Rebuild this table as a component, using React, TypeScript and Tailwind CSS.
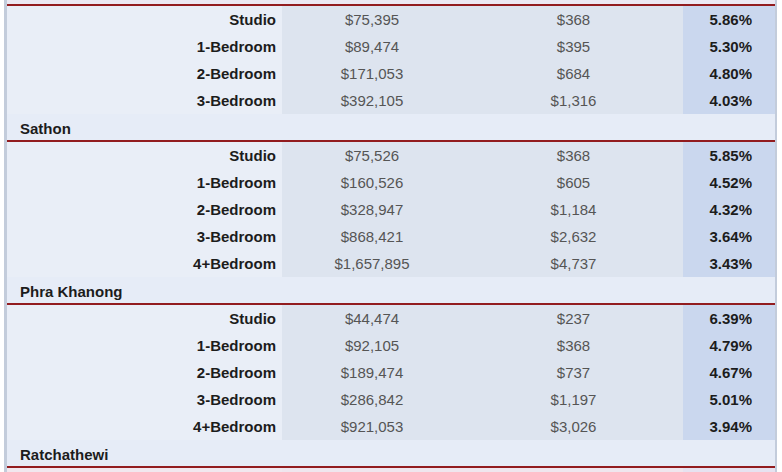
import React from 'react';

type Row = { type: string; price: string; rent: string; yieldPct: string };
type Group = { name: string; rows: Row[] };

const firstRows: Row[] = [
  { type: 'Studio', price: '$75,395', rent: '$368', yieldPct: '5.86%' },
  { type: '1-Bedroom', price: '$89,474', rent: '$395', yieldPct: '5.30%' },
  { type: '2-Bedroom', price: '$171,053', rent: '$684', yieldPct: '4.80%' },
  { type: '3-Bedroom', price: '$392,105', rent: '$1,316', yieldPct: '4.03%' },
];

const groups: Group[] = [
  {
    name: 'Sathon',
    rows: [
      { type: 'Studio', price: '$75,526', rent: '$368', yieldPct: '5.85%' },
      { type: '1-Bedroom', price: '$160,526', rent: '$605', yieldPct: '4.52%' },
      { type: '2-Bedroom', price: '$328,947', rent: '$1,184', yieldPct: '4.32%' },
      { type: '3-Bedroom', price: '$868,421', rent: '$2,632', yieldPct: '3.64%' },
      { type: '4+Bedroom', price: '$1,657,895', rent: '$4,737', yieldPct: '3.43%' },
    ],
  },
  {
    name: 'Phra Khanong',
    rows: [
      { type: 'Studio', price: '$44,474', rent: '$237', yieldPct: '6.39%' },
      { type: '1-Bedroom', price: '$92,105', rent: '$368', yieldPct: '4.79%' },
      { type: '2-Bedroom', price: '$189,474', rent: '$737', yieldPct: '4.67%' },
      { type: '3-Bedroom', price: '$286,842', rent: '$1,197', yieldPct: '5.01%' },
      { type: '4+Bedroom', price: '$921,053', rent: '$3,026', yieldPct: '3.94%' },
    ],
  },
  { name: 'Ratchathewi', rows: [] },
];

function DataRow({ row }: { row: Row }) {
  return (
    <div className="grid h-[27px] grid-cols-[275px_182px_219px_92px] items-center text-[15px] leading-none">
      <div className="flex h-full items-center justify-end bg-[#e9eef7] pr-[6px] font-bold text-[#1c1c1c]">{row.type}</div>
      <div className="flex h-full items-center justify-center bg-[#dde4ef] pr-[2px] text-[#555555]">{row.price}</div>
      <div className="flex h-full items-center justify-center bg-[#dde4ef] text-[#555555]">{row.rent}</div>
      <div className="flex h-full items-center justify-end bg-[#cad7ee] pr-[23px] font-bold text-[#1c1c1c]">{row.yieldPct}</div>
    </div>
  );
}

function GroupHeader({ name }: { name: string }) {
  return (
    <div className="flex h-[28px] items-center border-b-2 border-[#921c1f] bg-[#e6ecf7] pl-[13px] pt-[2px] text-[15px] font-bold leading-none text-[#1c1c1c]">
      {name}
    </div>
  );
}

export default function App() {
  return (
    <div className="h-[472px] w-[782px] overflow-hidden bg-white font-['Liberation_Sans',Arial,sans-serif]">
      <div className="ml-[4px] w-[773px] border-l-[3px] border-r-2 border-[#c3ccdb]">
        <div className="h-[6px] border-b-2 border-[#921c1f] bg-[#ece9f3]" />
        {firstRows.map((row) => (
          <DataRow key={row.type} row={row} />
        ))}
        {groups.map((group) => (
          <div key={group.name}>
            <GroupHeader name={group.name} />
            {group.rows.map((row) => (
              <DataRow key={row.type} row={row} />
            ))}
          </div>
        ))}
        <div className="grid h-[6px] grid-cols-[275px_182px_219px_92px]">
          <div className="bg-[#f1e8ef]" />
          <div className="bg-[#efe6ee]" />
          <div className="bg-[#efe6ee]" />
          <div className="bg-[#e6e2f0]" />
        </div>
      </div>
    </div>
  );
}
